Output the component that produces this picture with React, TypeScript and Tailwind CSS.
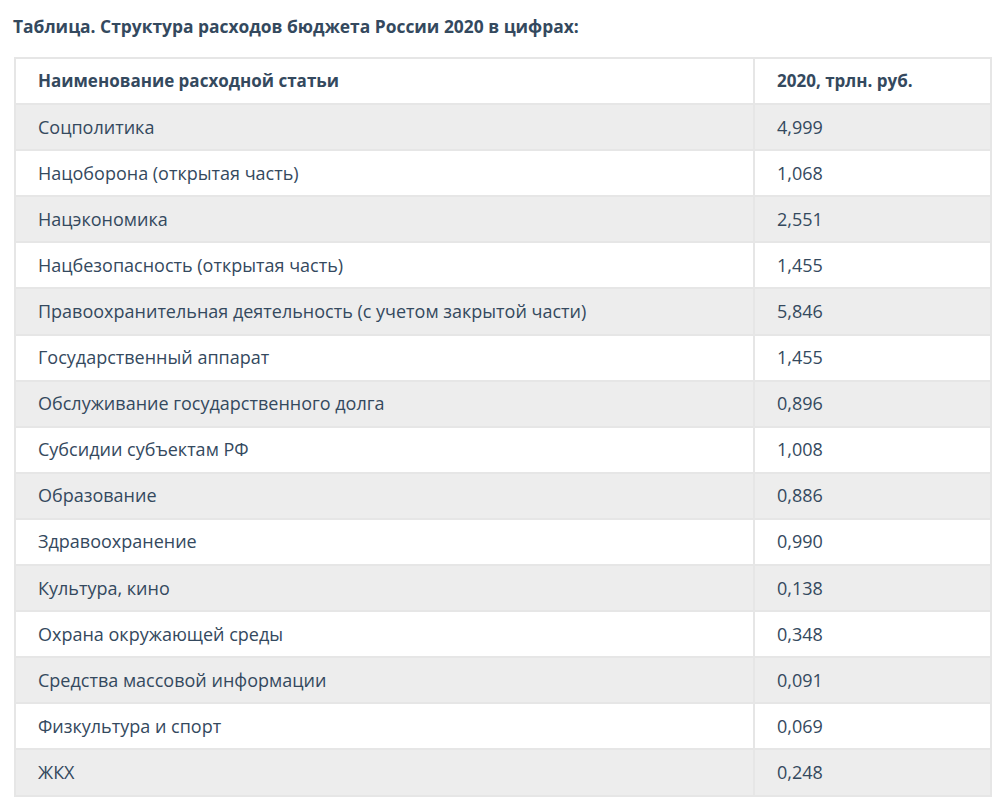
const rows: [string, string][] = [
  ["Соцполитика", "4,999"],
  ["Нацоборона (открытая часть)", "1,068"],
  ["Нацэкономика", "2,551"],
  ["Нацбезопасность (открытая часть)", "1,455"],
  ["Правоохранительная деятельность (с учетом закрытой части)", "5,846"],
  ["Государственный аппарат", "1,455"],
  ["Обслуживание государственного долга", "0,896"],
  ["Субсидии субъектам РФ", "1,008"],
  ["Образование", "0,886"],
  ["Здравоохранение", "0,990"],
  ["Культура, кино", "0,138"],
  ["Охрана окружающей среды", "0,348"],
  ["Средства массовой информации", "0,091"],
  ["Физкультура и спорт", "0,069"],
  ["ЖКХ", "0,248"],
];

const App = () => {
  return (
    <div className="min-h-screen bg-white px-[13px] pt-[14px] text-[#34495e] font-['Open_Sans',sans-serif]">
      <h3 className="text-[17.4px] font-bold leading-[24px]">
        Таблица. Структура расходов бюджета России 2020 в цифрах:
      </h3>
      <table className="mt-[19px] ml-px w-[978px] border-collapse border-2 border-[#e6e6e6] text-[18px]">
        <thead>
          <tr className="bg-white">
            <th className="w-[739px] h-[46.1px] border-2 border-[#e6e6e6] px-[22px] text-left text-[17px] font-bold">
              Наименование расходной статьи
            </th>
            <th className="h-[46.1px] border-2 border-[#e6e6e6] px-[22px] text-left text-[17px] font-bold">
              2020, трлн. руб.
            </th>
          </tr>
        </thead>
        <tbody>
          {rows.map(([name, value], i) => (
            <tr key={name} className={i % 2 === 0 ? "bg-[#ededed]" : "bg-white"}>
              <td className="h-[46.1px] border-2 border-[#e6e6e6] px-[22px]">{name}</td>
              <td className="h-[46.1px] border-2 border-[#e6e6e6] px-[22px]">{value}</td>
            </tr>
          ))}
        </tbody>
      </table>
    </div>
  );
};

export default App;
